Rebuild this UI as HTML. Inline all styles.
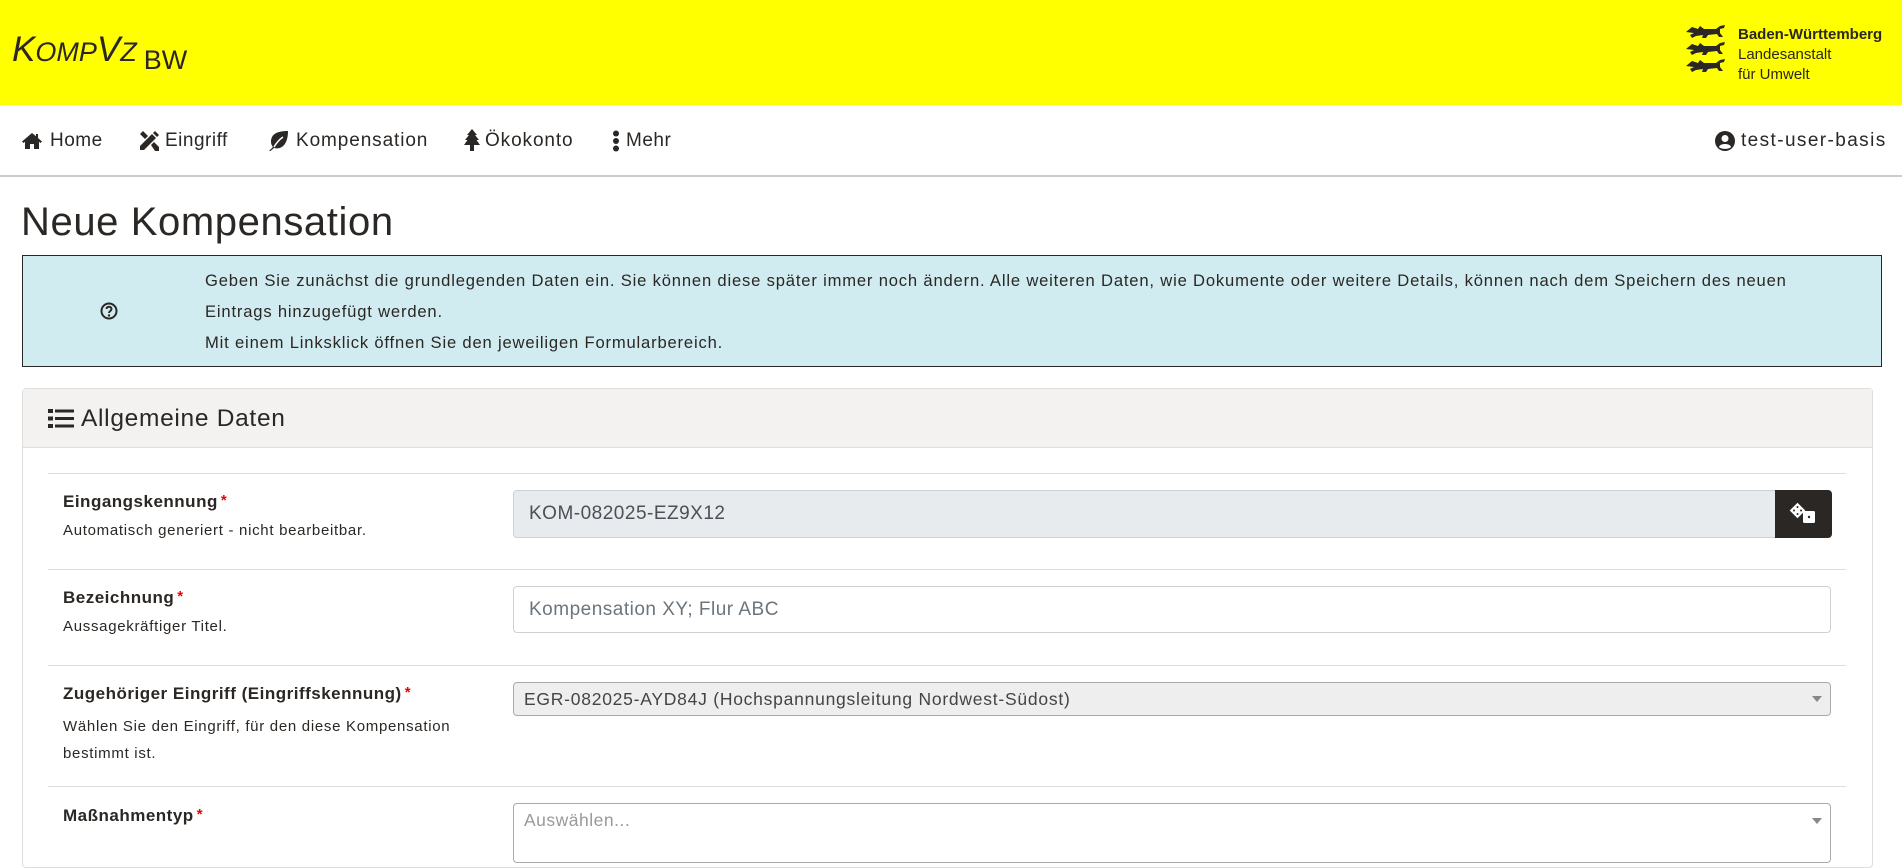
<!DOCTYPE html>
<html><head><meta charset="utf-8"><style>
*{box-sizing:border-box;margin:0;padding:0}
body{width:1902px;height:828px;overflow:hidden;background:#fff;font-family:"Liberation Sans",sans-serif;color:#2b2724;position:relative}
.a{position:absolute;white-space:nowrap}
#hdr{position:absolute;left:0;top:0;width:1902px;height:105px;background:#ffff00}
#nav{position:absolute;left:0;top:105px;width:1902px;height:72px;border-bottom:2px solid #cfccc8}
.nv{font-size:19px;top:130px;line-height:22px;letter-spacing:0.5px}
.lbl{font-size:17px;font-weight:bold;left:63px;letter-spacing:0.5px}
.lbl b{color:#e00;font-size:15px;vertical-align:top;margin-left:3px}
.hlp{font-size:15px;left:63px;letter-spacing:0.7px}
.sep{position:absolute;left:48px;width:1798px;height:1px;background:#dedede}
.inp{position:absolute;left:513px;width:1318px;border:1px solid #cfd2d4;border-radius:4px}
</style></head><body>
<div id="hdr"></div>
<div class="a" style="left:12px;top:30px;font-size:35px;font-style:italic;color:#2b2724;line-height:40px">K<span style="font-size:27px">OMP</span>V<span style="font-size:27px">Z</span><span style="font-style:normal;font-size:27px;position:relative;top:8px;margin-left:7px">BW</span></div>
<svg class="a" style="left:1686px;top:24px" width="40" height="52" viewBox="0 0 40 52" fill="#2b2724">
<g id="l"><path d="M0 8 L6 3 L12 5 L14 2 L18 5 L30 5 L34 2 L39 1 L38 4 L34 5 L34 9 L37 13 L33 13 L31 10 L22 11 L20 14 L16 14 L17 11 L10 12 L6 14 L4 11 L8 9 Z"/></g>
<use href="#l" y="17"/><use href="#l" y="34"/>
</svg>
<div class="a" style="left:1738px;top:25px;font-size:15px;line-height:20px;color:#2b2724"><b>Baden-Württemberg</b><br>Landesanstalt<br>für Umwelt</div>
<div id="nav"></div>
<svg class="a" style="left:21px;top:132px" width="22" height="18" viewBox="0 0 22 18" fill="#2b2724"><path d="M11 1 L1 9.5 L2.5 11 L4 9.8 V17 H9 V12 H13 V17 H18 V9.8 L19.5 11 L21 9.5 L17 6 V2 H15 V4.3 Z"/></svg>
<div class="a nv" style="left:50px">Home</div>
<svg class="a" style="left:138px;top:130px" width="22" height="22" viewBox="0 0 22 22" fill="#2b2724"><path d="M2 16 L14 4 L18 8 L6 20 L2 20 Z M15 3 L17 1 L21 5 L19 7 Z M2 4 L5 1 L10 6 L7 9 Z M13 15 L16 12 L21 17 L21 21 L17 21 Z"/></svg>
<div class="a nv" style="left:165px">Eingriff</div>
<svg class="a" style="left:267px;top:130px" width="22" height="22" viewBox="0 0 22 22" fill="#2b2724"><path d="M21 1 C10 1 4 4 4 12 C4 14 5 16 6 17 L2 21 L3.5 21 L7 18 C15 20 21 14 21 1 Z" /><path d="M7 17 C10 12 13 9 16 7" stroke="#fff" stroke-width="1.5" fill="none"/></svg>
<div class="a nv" style="left:296px;letter-spacing:0.9px">Kompensation</div>
<svg class="a" style="left:463px;top:129px" width="18" height="23" viewBox="0 0 18 23" fill="#2b2724"><path d="M9 0 L14 6 H12 L16 11 H13.5 L17 16 H11 V22 H7 V16 H1 L4.5 11 H2 L6 6 H4 Z"/></svg>
<div class="a nv" style="left:485px;letter-spacing:0.9px">Ökokonto</div>
<svg class="a" style="left:612px;top:130px" width="8" height="22" viewBox="0 0 8 22" fill="#2b2724"><circle cx="4" cy="3.5" r="3"/><circle cx="4" cy="11" r="3"/><circle cx="4" cy="18.5" r="3"/></svg>
<div class="a nv" style="left:626px">Mehr</div>
<svg class="a" style="left:1715px;top:131px" width="20" height="20" viewBox="0 0 20 20"><circle cx="10" cy="10" r="10" fill="#2b2724"/><circle cx="10" cy="7.5" r="3.5" fill="#fff"/><path d="M4 16 C5 12 15 12 16 16 C14 18.5 6 18.5 4 16Z" fill="#fff"/></svg>
<div class="a nv" style="left:1741px;letter-spacing:1.4px">test-user-basis</div>

<div class="a" style="left:21px;top:198px;font-size:40px;font-weight:300;line-height:48px;letter-spacing:0.6px">Neue Kompensation</div>

<div class="a" style="left:22px;top:255px;width:1860px;height:112px;background:#d1ecf1;border:1px solid #2b2724"></div>
<svg class="a" style="left:100px;top:302px" width="18" height="18" viewBox="0 0 18 18"><circle cx="9" cy="9" r="7.5" fill="none" stroke="#2b2724" stroke-width="2"/><path d="M6.5 7 C6.5 4 11.5 4 11.5 7 C11.5 9 9 9 9 11" fill="none" stroke="#2b2724" stroke-width="2"/><circle cx="9" cy="13.5" r="1.2" fill="#2b2724"/></svg>
<div class="a" style="left:205px;top:265px;font-size:16.6px;line-height:31px;letter-spacing:0.82px">Geben Sie zunächst die grundlegenden Daten ein. Sie können diese später immer noch ändern. Alle weiteren Daten, wie Dokumente oder weitere Details, können nach dem Speichern des neuen<br>Eintrags hinzugefügt werden.<br>Mit einem Linksklick öffnen Sie den jeweiligen Formularbereich.</div>

<div class="a" style="left:22px;top:388px;width:1851px;height:480px;border:1px solid #dedede;border-radius:4px"></div>
<div class="a" style="left:23px;top:389px;width:1849px;height:59px;background:#f3f2f1;border-bottom:1px solid #dedede"></div>
<svg class="a" style="left:48px;top:408px" width="26" height="21" viewBox="0 0 26 21" fill="#2b2724"><rect x="0" y="1" width="5" height="4"/><rect x="0" y="8.5" width="5" height="4"/><rect x="0" y="16" width="5" height="4"/><rect x="7" y="1.5" width="19" height="3"/><rect x="7" y="9" width="19" height="3"/><rect x="7" y="16.5" width="19" height="3"/></svg>
<div class="a" style="left:81px;top:405px;font-size:24.5px;line-height:28px;letter-spacing:0.7px">Allgemeine Daten</div>

<div class="sep" style="top:473px"></div>
<div class="sep" style="top:569px"></div>
<div class="sep" style="top:665px"></div>
<div class="sep" style="top:786px"></div>

<div class="a lbl" style="top:492px">Eingangskennung<b>*</b></div>
<div class="a hlp" style="top:522px">Automatisch generiert - nicht bearbeitbar.</div>
<div class="inp" style="top:490px;height:48px;background:#e8ebee"></div>
<div class="a" style="left:529px;top:503px;font-size:19px;color:#495057;letter-spacing:0.5px">KOM-082025-EZ9X12</div>
<div class="a" style="left:1775px;top:490px;width:57px;height:48px;background:#2b2724;border-radius:0 4px 4px 0"></div>
<svg class="a" style="left:1789px;top:502px" width="28" height="24" viewBox="0 0 28 24"><rect x="3" y="3" width="11" height="11" transform="rotate(45 8.5 8.5)" fill="#fff"/><rect x="14" y="9" width="12" height="12" rx="1.5" fill="#fff"/><circle cx="8.5" cy="5" r="1" fill="#2b2724"/><circle cx="5" cy="8.5" r="1" fill="#2b2724"/><circle cx="12" cy="8.5" r="1" fill="#2b2724"/><circle cx="8.5" cy="12" r="1" fill="#2b2724"/><circle cx="20" cy="15" r="1.2" fill="#2b2724"/></svg>

<div class="a lbl" style="top:588px">Bezeichnung<b>*</b></div>
<div class="a hlp" style="top:618px">Aussagekräftiger Titel.</div>
<div class="inp" style="top:586px;height:47px;background:#fff"></div>
<div class="a" style="left:529px;top:599px;font-size:19px;color:#6c757d;letter-spacing:0.5px">Kompensation XY; Flur ABC</div>

<div class="a lbl" style="top:684px">Zugehöriger Eingriff (Eingriffskennung)<b>*</b></div>
<div class="a hlp" style="top:713px;line-height:27px">Wählen Sie den Eingriff, für den diese Kompensation<br>bestimmt ist.</div>
<div class="inp" style="top:682px;height:34px;background:#eee;border-color:#aaa"></div>
<div class="a" style="left:524px;top:689px;font-size:17.5px;color:#444;letter-spacing:0.75px">EGR-082025-AYD84J (Hochspannungsleitung Nordwest-Südost)</div>
<svg class="a" style="left:1812px;top:696px" width="10" height="6"><path d="M0 0H10L5 6Z" fill="#888"/></svg>

<div class="a lbl" style="top:806px">Maßnahmentyp<b>*</b></div>
<div class="inp" style="top:803px;height:60px;background:#fff;border-color:#aaa"></div>
<div class="a" style="left:524px;top:810px;font-size:17.5px;color:#999;letter-spacing:0.5px">Auswählen...</div>
<svg class="a" style="left:1812px;top:818px" width="10" height="6"><path d="M0 0H10L5 6Z" fill="#888"/></svg>
</body></html>
